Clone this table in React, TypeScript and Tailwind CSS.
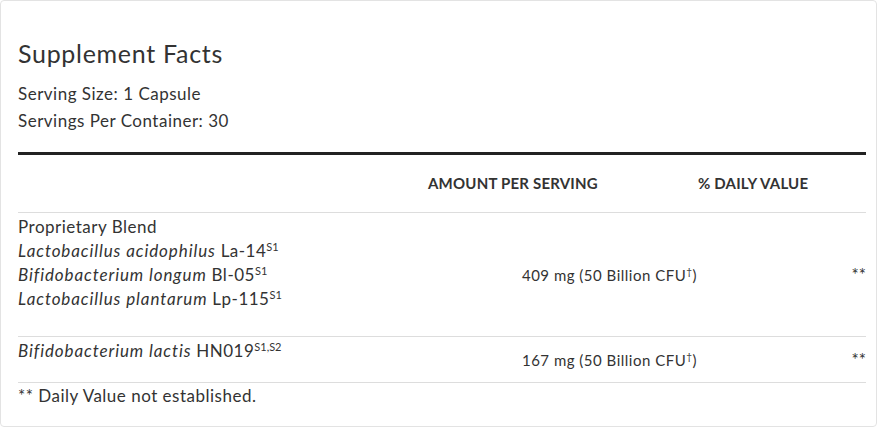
const rows = [
  {
    id: 1,
    lines: [
      { name: "Proprietary Blend" },
      { italic: "Lactobacillus acidophilus", code: "La-14", sup: "S1" },
      { italic: "Bifidobacterium longum", code: "Bl-05", sup: "S1" },
      { italic: "Lactobacillus plantarum", code: "Lp-115", sup: "S1" },
    ],
    amount: "409 mg (50 Billion CFU",
    pad: "pt-[2px] pb-[25px]",
  },
  {
    id: 2,
    lines: [{ italic: "Bifidobacterium lactis", code: "HN019", sup: "S1,S2" }],
    amount: "167 mg (50 Billion CFU",
    pad: "pt-[2px] pb-[19px]",
  },
];

const App = () => {
  return (
    <div className="w-[877px] h-[427px] bg-white font-['Lato',sans-serif] text-[#333]">
      <div className="h-full border border-[#e3e3e3] rounded-[4px] pl-[17px] pr-[10px] pt-[36px]">
        <h2 className="text-[25px] leading-[32px] tracking-[0.7px] text-[#333]">Supplement Facts</h2>
        <div className="mt-[11px] text-[17px] leading-[27px] tracking-[0.5px]">
          <p>Serving Size: 1 Capsule</p>
          <p>Servings Per Container: 30</p>
        </div>

        <div className="mt-[18px] border-t-[3px] border-[#222]">
          <div className="grid grid-cols-[410px_270px_1fr] h-[58px] items-center border-b border-[#ddd] text-[15px] font-bold uppercase tracking-[0.2px] text-[#333]">
            <span></span>
            <span>Amount Per Serving</span>
            <span>% Daily Value</span>
          </div>

          {rows.map((row) => (
            <div
              key={row.id}
              className="grid grid-cols-[410px_270px_1fr] border-b border-[#ddd]"
            >
              <div className={`text-[17px] leading-[24px] tracking-[0.5px] ${row.pad}`}>
                {row.lines.map((line, i) => (
                  <p key={i}>
                    {line.name}
                    {line.italic && <i className="tracking-[0.9px]">{line.italic}</i>}
                    {line.code && <> {line.code}</>}
                    {line.sup && (
                      <sup className="text-[11px] tracking-normal -top-[6px]">{line.sup}</sup>
                    )}
                  </p>
                ))}
              </div>
              <div className="flex items-center justify-end text-[15px] leading-[24px] tracking-[0.5px] pr-[1px]">
                <span>
                  {row.amount}
                  <sup className="text-[10px] -top-[6px]">†</sup>)
                </span>
              </div>
              <div className="flex items-center justify-end text-[17px] leading-[24px]">**</div>
            </div>
          ))}

          <p className="text-[17px] leading-[24px] tracking-[0.5px] pt-[1px]">** Daily Value not established.</p>
        </div>
      </div>
    </div>
  );
};

export default App;
